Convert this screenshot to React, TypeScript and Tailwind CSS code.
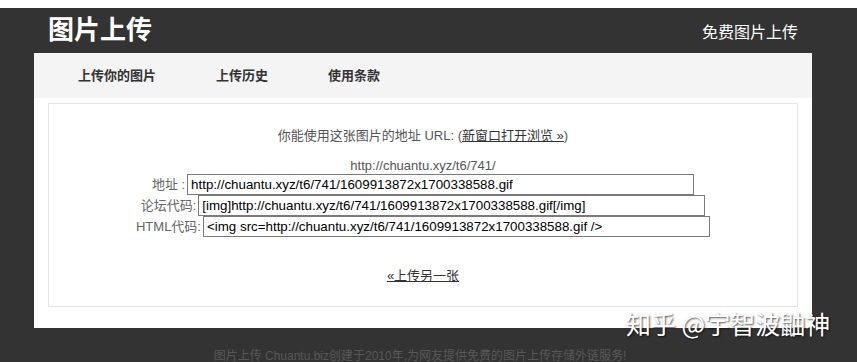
const CJK = "font-['Liberation_Sans','Noto_Sans_CJK_SC',sans-serif]";

function Field({ label, value, width = 'w-[507px]' }: { label: string; value: string; width?: string }) {
  return (
    <div className="flex justify-center items-center gap-[2px] h-[21px]">
      <span className="text-[13px] text-[#666]">{label}</span>
      <input
        readOnly
        value={value}
        className={`${width} h-[21px] border border-[#7a7a7a] px-[3px] text-[13.33px] text-black outline-none bg-white`}
      />
    </div>
  );
}

export default function App() {
  return (
    <div className={`relative w-[857px] h-[362px] overflow-hidden bg-white pt-[8px] ${CJK}`}>
      <div className="bg-[#333] h-full">
        {/* Header */}
        <header className="h-[45px] flex items-center justify-between pl-[48px] pr-[59px]">
          <h1 className="text-[26px] font-bold text-white leading-none -mt-[2px]">图片上传</h1>
          <span className="text-[16px] text-white mt-[4px]">免费图片上传</span>
        </header>

        {/* Main container */}
        <div className="ml-[34px] w-[778px] bg-white">
          <nav className="h-[45px] bg-[#f4f4f4] flex items-center pl-[44px] gap-[60px] text-[13px] font-bold text-[#333]">
            <span>上传你的图片</span>
            <span>上传历史</span>
            <span>使用条款</span>
          </nav>

          <div className="pt-[5px] px-[14px] pb-[21px]">
            <div className="h-[204px] border border-[#e5e5e5] pt-[22px] text-center text-[13px] text-[#555]">
              <p className="leading-[20px]">
                你能使用这张图片的地址 URL: (
                <a className="underline text-[#333]">新窗口打开浏览 »</a>)
              </p>
              <p className="leading-[16px] mt-[12px]">http://chuantu.xyz/t6/741/</p>
              <Field label="地址 :" value="http://chuantu.xyz/t6/741/1609913872x1700338588.gif" />
              <Field label="论坛代码:" value="[img]http://chuantu.xyz/t6/741/1609913872x1700338588.gif[/img]" />
              <Field label="HTML代码:" value="<img src=http://chuantu.xyz/t6/741/1609913872x1700338588.gif />" />
              <p className="leading-[20px] mt-[29px]">
                <a className="underline text-[#333]">«上传另一张</a>
              </p>
            </div>
          </div>
        </div>

        {/* Footer */}
        <footer className="pt-[20px] pr-[17px] text-center text-[12px] leading-[16px] text-[#585858]">
          图片上传 Chuantu.biz创建于2010年,为网友提供免费的图片上传存储外链服务!
        </footer>
      </div>

      {/* Watermark */}
      <div className="absolute left-[626px] top-[306px] text-[25px] leading-[34px] text-white font-['Noto_Sans_CJK_SC',sans-serif] [text-shadow:1px_1px_2px_rgba(0,0,0,0.7)]">
        知乎 @宇智波鼬神
      </div>
    </div>
  );
}
